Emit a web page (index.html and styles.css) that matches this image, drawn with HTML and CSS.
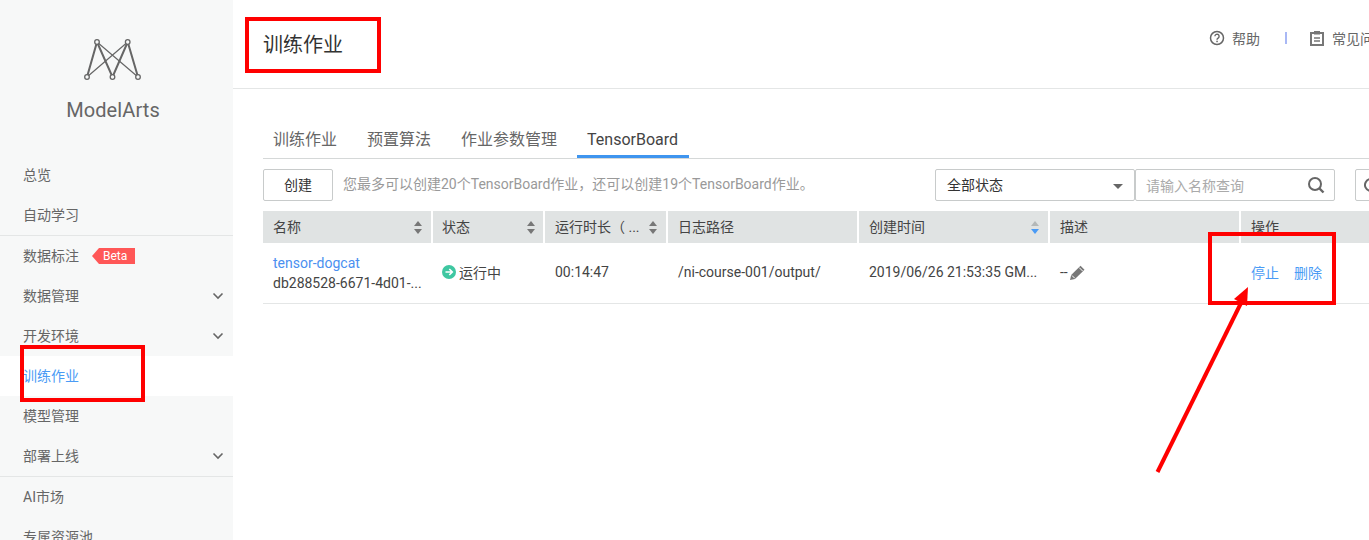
FILE: index.html
```html
<!DOCTYPE html>
<html lang="zh">
<head>
<meta charset="utf-8">
<title>ModelArts</title>
<link rel="stylesheet" href="styles.css">
</head>
<body>
<div class="app">
  <aside class="sidebar">
    <div class="brand">
      <svg class="logo" width="66" height="46" viewBox="80 36 66 46">
        <g fill="none" stroke="#666">
          <path stroke-width="2" d="M87 77L97 42L112.500 77L127.700 42L138 77"/>
          <path stroke-width="1.200" d="M97 42L138 77M127.700 42L87 77"/>
          <g fill="#f7f8f8" stroke-width="1.300">
            <circle cx="97" cy="42" r="2.300"/><circle cx="127.700" cy="42" r="2.300"/>
            <circle cx="87" cy="77" r="2.300"/><circle cx="112.500" cy="77" r="2.300"/><circle cx="138" cy="77" r="2.300"/>
          </g>
        </g>
      </svg>
      <div class="brand-name">ModelArts</div>
    </div>
    <nav class="nav">
      <div class="nav-item">总览</div>
      <div class="nav-item nav-end">自动学习</div>
      <div class="nav-item">数据标注<span class="beta">Beta</span></div>
      <div class="nav-item">数据管理<svg class="chev" width="12" height="8" viewBox="0 0 12 8"><path d="M1.500 1.500L6 6L10.500 1.500" fill="none" stroke="#666" stroke-width="1.600"/></svg></div>
      <div class="nav-item">开发环境<svg class="chev" width="12" height="8" viewBox="0 0 12 8"><path d="M1.500 1.500L6 6L10.500 1.500" fill="none" stroke="#666" stroke-width="1.600"/></svg></div>
      <div class="nav-item active">训练作业</div>
      <div class="nav-item">模型管理</div>
      <div class="nav-item nav-end">部署上线<svg class="chev" width="12" height="8" viewBox="0 0 12 8"><path d="M1.500 1.500L6 6L10.500 1.500" fill="none" stroke="#666" stroke-width="1.600"/></svg></div>
      <div class="nav-item">AI市场</div>
      <div class="nav-item">专属资源池</div>
    </nav>
  </aside>
  <main class="main">
    <header class="topbar">
      <h1 class="title">训练作业</h1>
      <div class="tools">
        <svg width="16" height="16" viewBox="0 0 16 16"><circle cx="8" cy="8" r="6.500" fill="none" stroke="#666" stroke-width="1.500"/><path d="M5.900 6.300a2.100 2.100 0 1 1 3.200 1.800c-.8.500-1.100.8-1.100 1.600" fill="none" stroke="#666" stroke-width="1.400"/><rect x="7.300" y="10.700" width="1.500" height="1.500" fill="#666"/></svg>
        <span class="tool-text">帮助</span>
        <span class="tool-sep"></span>
        <svg width="14" height="16" viewBox="0 0 14 16"><path d="M1 3h12v12H1z" fill="none" stroke="#777" stroke-width="2"/><rect x="4" y="1" width="6" height="3.500" fill="#777"/><path d="M4 8h6M4 11h6" stroke="#777" stroke-width="1.400"/></svg>
        <span class="tool-text">常见问题</span>
      </div>
    </header>
    <div class="content">
      <div class="tabs">
        <div class="tab">训练作业</div>
        <div class="tab">预置算法</div>
        <div class="tab">作业参数管理</div>
        <div class="tab tab-active">TensorBoard</div>
      </div>
      <div class="toolbar">
        <button class="btn">创建</button>
        <span class="hint">您最多可以创建20个TensorBoard作业，还可以创建19个TensorBoard作业。</span>
        <div class="select">全部状态<span class="caret"></span></div>
        <div class="search">
          <span class="placeholder">请输入名称查询</span>
          <svg width="18" height="18" viewBox="0 0 18 18"><circle cx="8" cy="8" r="6" fill="none" stroke="#666" stroke-width="2"/><path d="M12.500 12.500L16.500 16.500" stroke="#666" stroke-width="2.400"/></svg>
        </div>
        <button class="refresh"><svg width="18" height="18" viewBox="0 0 18 18"><path d="M15 9a6 6 0 1 1-2-4.500" fill="none" stroke="#666" stroke-width="2"/></svg></button>
      </div>
      <div class="table">
        <div class="th">名称<span class="sort"></span></div>
        <div class="th th-tight">状态<span class="sort"></span></div>
        <div class="th">运行时长（ ...<span class="sort"></span></div>
        <div class="th">日志路径</div>
        <div class="th">创建时间<span class="sort sort-down"></span></div>
        <div class="th">描述</div>
        <div class="th th-last">操作</div>

        <div class="td td-name"><span class="link">tensor-dogcat</span><span>db288528-6671-4d01-...</span></div>
        <div class="td td-status">
          <svg width="14" height="14" viewBox="0 0 14 14"><circle cx="7" cy="7" r="7" fill="#3fc7a1"/><path d="M3.500 7H10M7.300 4L10.300 7L7.300 10" fill="none" stroke="#fff" stroke-width="1.600"/></svg>
          <span>运行中</span>
        </div>
        <div class="td">00:14:47</div>
        <div class="td">/ni-course-001/output/</div>
        <div class="td">2019/06/26 21:53:35 GM...</div>
        <div class="td td-desc">--<svg width="17" height="17" viewBox="0 0 17 17"><path d="M1 16l1.200-5L11.500 1.800l4 4L6 15z" fill="#777"/><path d="M10.200 3.600l3.500 3.500M3 11.500l2.800 2.800" stroke="#fff" stroke-width="1"/></svg></div>
        <div class="td td-actions"><span class="action">停止</span><span class="action">删除</span></div>
      </div>
    </div>
  </main>
  <div class="mark mark-title"></div>
  <div class="mark mark-nav"></div>
  <div class="mark mark-actions"></div>
  <svg class="arrow" width="110" height="200" viewBox="1150 280 110 200">
    <path d="M1157.500 472L1242 301" stroke="#f00" stroke-width="4" fill="none"/>
    <path d="M1248 287L1247 306L1234 299z" fill="#f00"/>
  </svg>
</div>
</body>
</html>
```
FILE: styles.css
```css
* { box-sizing: border-box; }
html, body { margin: 0; padding: 0; background: #fff; }
body { font-family: Roboto, "Noto Sans CJK SC", sans-serif; font-size: 14px; color: #333; }
.app { position: relative; display: flex; width: 1369px; height: 540px; overflow: hidden; }

.sidebar { flex: 0 0 233px; background: #f7f8f8; height: 540px; overflow: hidden; }
.brand { height: 155px; display: flex; flex-direction: column; align-items: center; padding: 36px 7px 0 0; }
.logo { display: block; }
.brand-name { font-size: 20px; line-height: 26px; color: #666; margin-top: 15px; letter-spacing: .1px; }
.nav { display: flex; flex-direction: column; }
.nav-item { flex: none; height: 40px; display: flex; align-items: center; padding: 0 0 2px 23px; color: #666; font-size: 14px; position: relative; }
.nav-end { height: 41px; padding-bottom: 3px; border-bottom: 1px solid #e4e6e6; }
.active { background: #fff; color: #4a9bf5; }
.beta { margin: 2px 0 0 13px; height: 16px; width: 43px; padding-left: 11px; background: #ff5757; color: #fff; font-size: 12px; line-height: 16px; clip-path: polygon(7px 0, 100% 0, 100% 100%, 7px 100%, 0 50%); }
.chev { position: absolute; left: 212px; top: 16px; }

.main { flex: 1; min-width: 0; overflow: hidden; }
.topbar { height: 89px; border-bottom: 1px solid #e4e6e6; display: flex; justify-content: space-between; padding-left: 30px; }
.title { margin: 30px 0 0; font-size: 20px; font-weight: 400; line-height: 30px; color: #333; }
.tools { width: 160px; height: 30px; margin-top: 23px; display: flex; align-items: center; white-space: nowrap; overflow: hidden; flex: none; color: #666; font-size: 14px; }
.tools svg { flex: none; }
.tools > svg:first-child { margin-right: 7px; }
.tool-text { flex: none; margin-bottom: 1px; }
.tool-sep { flex: none; width: 2px; height: 12px; background: #a9b8f5; margin: 0 23px 0 25px; }
.tools > svg:nth-of-type(2) { margin-right: 8px; }

.content { width: 1124px; margin-left: 30px; }
.tabs { display: flex; gap: 10px; height: 70px; padding-top: 33px; border-bottom: 1px solid #d5d8d8; align-items: stretch; }
.tab { padding: 0 10px; font-size: 16px; line-height: 36px; color: #666; height: 36px; }
.tab-active { color: #444; width: 112px; border-bottom: 3px solid #3f95ef; }
.toolbar { display: flex; align-items: center; height: 32px; margin-top: 10px; }
.btn { width: 70px; height: 32px; background: #fff; border: 1px solid #c8cbcb; border-radius: 2px; font: inherit; color: #333; padding: 0 0 2px; }
.hint { flex: 1; margin-left: 10px; font-size: 14px; color: #999; padding-bottom: 5px; }
.select { width: 200px; height: 32px; border: 1px solid #c8cbcb; border-radius: 2px; padding: 0 0 2px 11px; display: flex; align-items: center; position: relative; font-size: 14px; }
.caret { position: absolute; right: 11px; top: 14px; border: 5px solid transparent; border-top: 5px solid #666; border-bottom: 0; }
.search { width: 200px; height: 32px; border: 1px solid #c8cbcb; border-radius: 2px; padding: 0 9px 0 10px; display: flex; align-items: center; justify-content: space-between; }
.placeholder { font-size: 14px; color: #aaa; }
.refresh { width: 32px; height: 32px; margin-left: 20px; background: #fff; border: 1px solid #c8cbcb; border-radius: 2px; padding: 0; display: flex; align-items: center; justify-content: center; flex: none; }

.table { display: grid; grid-template-columns: 170px 112px 123px 191px 191px 191px 146px; grid-template-rows: 32px 61px; margin-top: 10px; }
.th { background: #e0e3e3; border-right: 2px solid #fff; padding: 0 0 2px 10px; display: flex; align-items: center; position: relative; font-size: 14px; color: #444; white-space: nowrap; }
.th-tight { padding-left: 9px; }
.th-last { border-right: 0; }
.sort { position: absolute; right: 8px; top: 10px; width: 9px; height: 13px; }
.th-tight .sort { right: 7px; }
.sort::before, .sort::after { content: ""; position: absolute; left: 0; border: 4.500px solid transparent; }
.sort::before { top: 0; border-top: 0; border-bottom: 5px solid #777; }
.sort::after { bottom: 0; border-bottom: 0; border-top: 5px solid #777; }
.sort-down::before { border-bottom-color: #b4b8b8; }
.sort-down::after { border-top-color: #4a9bf5; }
.td { border-bottom: 1px solid #e4e6e6; padding: 0 0 2px 10px; display: flex; align-items: center; font-size: 14px; color: #444; white-space: nowrap; }
.td-name { flex-direction: column; align-items: flex-start; justify-content: center; line-height: 20px; padding-bottom: 0; }
.link { color: #4a90f0; }
.td-status { gap: 3px; padding-left: 9px; }
.td-desc { gap: 1px; }
.td-actions { gap: 15px; }
.action { color: #4a9bf5; }

.mark { position: absolute; border: 4px solid #f00; pointer-events: none; }
.mark-title { left: 245px; top: 17px; width: 136px; height: 56px; }
.mark-nav { left: 20px; top: 345px; width: 125px; height: 57px; }
.mark-actions { left: 1208px; top: 232px; width: 128px; height: 73px; }
.arrow { position: absolute; left: 1150px; top: 280px; pointer-events: none; }
```
